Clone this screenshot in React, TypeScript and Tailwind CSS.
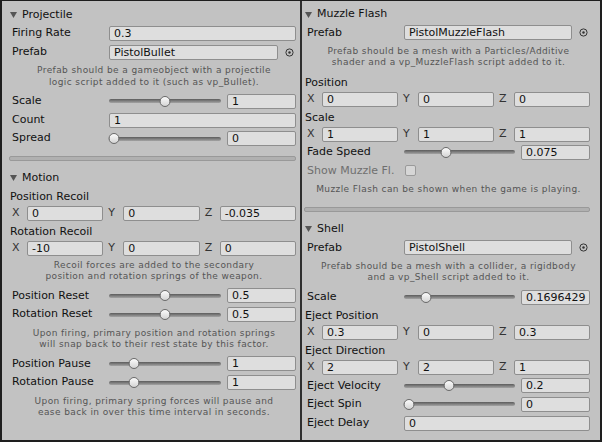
import React from "react";

const font = { fontFamily: '"DejaVu Sans", Verdana, sans-serif' };

function Field({ value, className = "" }: { value: string; className?: string }) {
  return (
    <div
      className={
        "h-[15px] min-w-0 overflow-hidden whitespace-nowrap rounded-[2px] border border-[#8e8e8e] bg-[#dedede] pl-[4px] text-[11px] leading-[13px] text-[#111] " +
        className
      }
    >
      {value}
    </div>
  );
}

function Header({ title }: { title: string }) {
  return (
    <div className="-ml-[2px] flex h-[18px] items-center gap-[5px] text-[11px] text-[#111]">
      <svg width="7" height="6" viewBox="0 0 7 6">
        <path d="M0 0H7L3.5 6Z" fill="#555" />
      </svg>
      <span>{title}</span>
    </div>
  );
}

function Row({ label, children, muted }: { label: string; children: React.ReactNode; muted?: boolean }) {
  return (
    <div className="flex h-[18.7px] items-center text-[11px]">
      <span className={"w-[97px] shrink-0 whitespace-nowrap " + (muted ? "text-[#6f6f6f]" : "text-[#111]")}>{label}</span>
      {children}
    </div>
  );
}

function Target() {
  return (
    <div className="flex w-[18px] shrink-0 justify-end pr-[2px]">
      <svg width="9" height="9" viewBox="0 0 9 9">
        <circle cx="4.5" cy="4.5" r="3.6" fill="none" stroke="#333" strokeWidth="1" />
        <circle cx="4.5" cy="4.5" r="1.2" fill="#333" />
      </svg>
    </div>
  );
}

function Slider({ f, value }: { f: number; value: string }) {
  return (
    <div className="flex flex-1 items-center gap-[6px]">
      <div className="relative h-[12px] flex-1">
        <div className="absolute left-0 right-0 top-[4px] h-[4px] rounded-full bg-gradient-to-b from-[#5c5c5c] to-[#a4a4a4]" />
        <div
          className="absolute top-[0.5px] h-[11px] w-[11px] -translate-x-1/2 rounded-full border border-[#6a6a6a] bg-gradient-to-b from-[#fbfbfb] to-[#d4d4d4]"
          style={{ left: `calc(5px + ${f} * (100% - 10px))` }}
        />
      </div>
      <Field value={value} className="w-[69px] shrink-0" />
    </div>
  );
}

function Vector({ label, v }: { label: string; v: string[] }) {
  return (
    <div className="mb-[1px] mt-[2px] text-[11px] text-[#111]">
      <div className="-ml-[2px] flex h-[16px] items-center">{label}</div>
      <div className="grid h-[16px] grid-cols-3 items-center gap-x-[5px]">
        {["X", "Y", "Z"].map((a, i) => (
          <div key={a} className="flex items-center">
            <span className="w-[15px] shrink-0 text-[#333]">{a}</span>
            <Field value={v[i]} className="flex-1" />
          </div>
        ))}
      </div>
    </div>
  );
}

function Help({ lines, className = "my-[4px]" }: { lines: string[]; className?: string }) {
  return (
    <div className={"text-center text-[9px] leading-[11.3px] tracking-[0.4px] text-[#555] " + className}>
      {lines.map((l) => (
        <div key={l} className="whitespace-nowrap">{l}</div>
      ))}
    </div>
  );
}

function Separator() {
  return <div className="-ml-[3px] my-[8px] h-[5px] rounded-[2px] border border-[#999] bg-[#b0b0b0]" />;
}

export default function App() {
  return (
    <div
      className="flex h-[442px] w-[602px] border-x-2 border-b-2 border-t border-[#1e1e1e] bg-[#c2c2c2]"
      style={font}
    >
      <div className="flex w-[298px] shrink-0 flex-col pl-[10px] pr-[4px] pt-[5px]">
        <Header title="Projectile" />
        <Row label="Firing Rate">
          <Field value="0.3" className="flex-1" />
        </Row>
        <Row label="Prefab">
          <Field value="PistolBullet" className="flex-1" />
          <Target />
        </Row>
        <Help lines={["Prefab should be a gameobject with a projectile", "logic script added to it (such as vp_Bullet)."]} />
        <Row label="Scale">
          <Slider f={0.5} value="1" />
        </Row>
        <Row label="Count">
          <Field value="1" className="flex-1" />
        </Row>
        <Row label="Spread">
          <Slider f={0} value="0" />
        </Row>
        <Separator />
        <Header title="Motion" />
        <Vector label="Position Recoil" v={["0", "0", "-0.035"]} />
        <Vector label="Rotation Recoil" v={["-10", "0", "0"]} />
        <Help
          className="mb-[4px] mt-[3px]"
          lines={["Recoil forces are added to the secondary", "position and rotation springs of the weapon."]}
        />
        <Row label="Position Reset">
          <Slider f={0.5} value="0.5" />
        </Row>
        <Row label="Rotation Reset">
          <Slider f={0.5} value="0.5" />
        </Row>
        <Help lines={["Upon firing, primary position and rotation springs", "will snap back to their rest state by this factor."]} />
        <Row label="Position Pause">
          <Slider f={0.2} value="1" />
        </Row>
        <Row label="Rotation Pause">
          <Slider f={0.2} value="1" />
        </Row>
        <Help lines={["Upon firing, primary spring forces will pause and", "ease back in over this time interval in seconds."]} />
      </div>

      <div className="w-[2px] shrink-0 bg-[#2e2e2e]" />

      <div className="flex flex-1 flex-col pl-[5px] pr-[10px] pt-[4.5px]">
        <Header title="Muzzle Flash" />
        <Row label="Prefab">
          <Field value="PistolMuzzleFlash" className="flex-1" />
          <Target />
        </Row>
        <Help lines={["Prefab should be a mesh with a Particles/Additive", "shader and a vp_MuzzleFlash script added to it."]} />
        <Vector label="Position" v={["0", "0", "0"]} />
        <Vector label="Scale" v={["1", "1", "1"]} />
        <Row label="Fade Speed">
          <Slider f={0.37} value="0.075" />
        </Row>
        <Row label="Show Muzzle Fl." muted>
          <div className="ml-[1px] h-[11px] w-[11px] rounded-[2px] border border-[#9a9a9a] bg-[#d6d6d6]" />
        </Row>
        <Help lines={["Muzzle Flash can be shown when the game is playing."]} />
        <Separator />
        <Header title="Shell" />
        <Row label="Prefab">
          <Field value="PistolShell" className="flex-1" />
          <Target />
        </Row>
        <Help lines={["Prefab should be a mesh with a collider, a rigidbody", "and a vp_Shell script added to it."]} />
        <Row label="Scale">
          <Slider f={0.166} value="0.1696429" />
        </Row>
        <Vector label="Eject Position" v={["0.3", "0", "0.3"]} />
        <Vector label="Eject Direction" v={["2", "2", "1"]} />
        <Row label="Eject Velocity">
          <Slider f={0.4} value="0.2" />
        </Row>
        <Row label="Eject Spin">
          <Slider f={0} value="0" />
        </Row>
        <Row label="Eject Delay">
          <Field value="0" className="flex-1" />
        </Row>
      </div>
    </div>
  );
}
